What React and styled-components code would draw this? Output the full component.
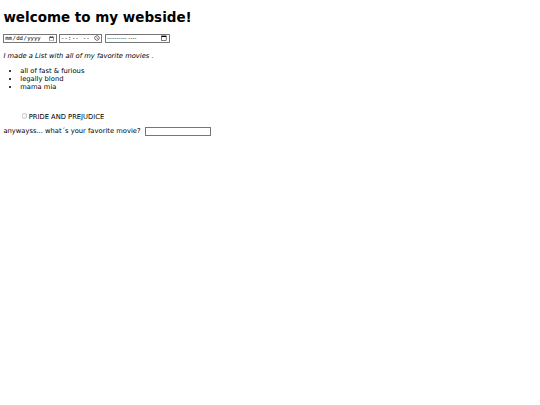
import React from 'react';
import styled, { createGlobalStyle } from 'styled-components';

const GlobalStyle = createGlobalStyle`
    html, body {
        margin: 0;
        background: #fff;
    }
`;

// the reference is a 1280px wide page shrunk to 540px
const Page = styled.div`
    zoom: 0.421875;
    margin: 8px;
    font-family: "DejaVu Sans", Verdana, sans-serif;
    font-size: 16px;
    color: #000;
`;

const Title = styled.h1`
    font-size: 32px;
    margin: 21px 0;
`;

const Pickers = styled.div`
    display: flex;
    align-items: center;
    gap: 6px;
    padding-bottom: 6px;
`;

const Picker = styled.input`
    box-sizing: border-box;
    width: ${({ size }) => size}px;
    height: 22px;
`;

const MonthField = styled.span`
    display: inline-flex;
    align-items: center;
    justify-content: space-between;
    box-sizing: border-box;
    width: 154px;
    height: 22px;
    padding: 1px 4px 1px 3px;
    border: 1px solid #767676;
    border-radius: 2px;
    font-family: "Liberation Sans", Arial, sans-serif;
    font-size: 13.33px;
    letter-spacing: 0.3px;
    color: #000;
`;

const Note = styled.p`
    font-style: italic;
    margin: 16px 0;
`;

const MovieList = styled.ul`
    margin: 16px 0;
    padding-left: 40px;
`;

const Indented = styled.div`
    margin: 50px 0 15px 40px;
`;

const Question = styled.div`
    margin: 0;
`;

const AnswerInput = styled.input`
    box-sizing: border-box;
    width: 158px;
    height: 21px;
    margin-left: 5px;
`;

const CalendarIcon = () => (
    <svg width="14" height="14" viewBox="0 0 16 16">
        <rect x="2" y="2.5" width="12" height="12" fill="none" stroke="#000" strokeWidth="1.4" />
        <rect x="2" y="2.5" width="12" height="3" fill="#000" />
    </svg>
);

const App = () => (
    <>
        <GlobalStyle />
        <Page>
            <Title>welcome to my webside!</Title>
            <Pickers>
                <Picker type="date" size={126} />
                <Picker type="time" size={102} />
                <MonthField>
                    <span>---------- ----</span>
                    <CalendarIcon />
                </MonthField>
            </Pickers>
            <Note>I made a List with all of my favorite movies .</Note>
            <MovieList>
                <li>all of fast &amp; furious</li>
                <li>legally blond</li>
                <li>mama mia</li>
            </MovieList>
            <Indented>
                <label><input type="checkbox" />PRIDE AND PREJUDICE</label>
            </Indented>
            <Question>
                anywayss... what´s your favorite movie? <AnswerInput type="text" />
            </Question>
        </Page>
    </>
);

export default App;
